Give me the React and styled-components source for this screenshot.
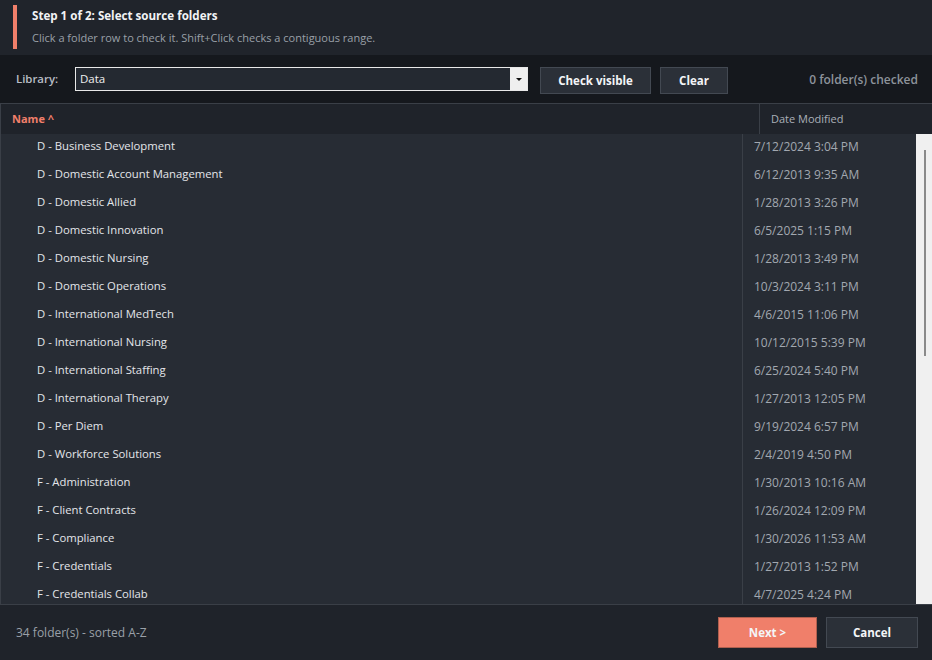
import React from "react";
import styled, { createGlobalStyle } from "styled-components";

const GlobalStyle = createGlobalStyle`
  html, body { margin: 0; padding: 0; background: #1f232a; }
  body { font-family: "Open Sans", "Noto Sans", sans-serif; }
  * { box-sizing: border-box; }
`;

const folders = [
  ["D - Business Development", "7/12/2024 3:04 PM"],
  ["D - Domestic Account Management", "6/12/2013 9:35 AM"],
  ["D - Domestic Allied", "1/28/2013 3:26 PM"],
  ["D - Domestic Innovation", "6/5/2025 1:15 PM"],
  ["D - Domestic Nursing", "1/28/2013 3:49 PM"],
  ["D - Domestic Operations", "10/3/2024 3:11 PM"],
  ["D - International MedTech", "4/6/2015 11:06 PM"],
  ["D - International Nursing", "10/12/2015 5:39 PM"],
  ["D - International Staffing", "6/25/2024 5:40 PM"],
  ["D - International Therapy", "1/27/2013 12:05 PM"],
  ["D - Per Diem", "9/19/2024 6:57 PM"],
  ["D - Workforce Solutions", "2/4/2019 4:50 PM"],
  ["F - Administration", "1/30/2013 10:16 AM"],
  ["F - Client Contracts", "1/26/2024 12:09 PM"],
  ["F - Compliance", "1/30/2026 11:53 AM"],
  ["F - Credentials", "1/27/2013 1:52 PM"],
  ["F - Credentials Collab", "4/7/2025 4:24 PM"],
];

const Page = styled.div`
  width: 932px;
  height: 660px;
  display: flex;
  flex-direction: column;
  background: #1f232a;
  color: #e4e6ea;
  font-size: 12px;
  overflow: hidden;
`;

const StepHeader = styled.div`
  height: 55px;
  padding: 5px 0 6px 13px;
  display: flex;
  background: #20242b;
`;

const StepMark = styled.div`
  width: 4px;
  background: #f07f6a;
`;

const StepText = styled.div`
  padding: 2px 0 0 15px;
  display: flex;
  flex-direction: column;
`;

const StepTitle = styled.div`
  font-weight: 700;
  font-size: 11.6px;
  color: #f2f3f5;
  line-height: 18px;
`;

const StepHint = styled.div`
  margin-top: 5px;
  font-size: 11px;
  color: #9aa0a8;
  line-height: 16px;
`;

const Toolbar = styled.div`
  height: 48px;
  display: flex;
  align-items: flex-start;
  padding: 12px 14px 0 16px;
  background: #15181d;
`;

const Label = styled.span`
  font-weight: 600;
  font-size: 11.4px;
  line-height: 24px;
  color: #b9bec6;
  width: 59px;
`;

const Select = styled.div`
  width: 453px;
  height: 24px;
  display: flex;
  border: 1px solid #e8e8e8;
  background: #242931;
`;

const SelectValue = styled.div`
  flex: 1;
  padding-left: 4px;
  line-height: 21px;
  font-size: 11.5px;
  color: #f0f0f0;
`;

const SelectArrow = styled.div`
  width: 17px;
  background: #efefef;
  display: flex;
  align-items: center;
  justify-content: center;
  &::after {
    content: "";
    border-left: 3px solid transparent;
    border-right: 3px solid transparent;
    border-top: 3px solid #111;
  }
`;

const Button = styled.button`
  height: ${(p) => p.$h || 27}px;
  width: ${(p) => p.$w}px;
  margin-left: ${(p) => p.$ml || 0}px;
  border: 1px solid ${(p) => (p.$primary ? "#b0604f" : "#434952")};
  background: ${(p) => (p.$primary ? "#f07f6a" : "#2b3038")};
  color: #f4f5f7;
  font-family: inherit;
  font-size: 11.5px;
  font-weight: 700;
  padding: 0;
`;

const Checked = styled.span`
  margin-left: auto;
  font-weight: 600;
  line-height: 25px;
  color: #8d939b;
`;

const Table = styled.div`
  flex: 1;
  display: flex;
  flex-direction: column;
  border-top: 1px solid #3a3f47;
  border-left: 1px solid #3a3f47;
  border-bottom: 1px solid #3a3f47;
  min-height: 0;
`;

const HeadRow = styled.div`
  height: 30px;
  display: flex;
  background: #1f232a;
`;

const HeadCell = styled.div`
  display: flex;
  align-items: center;
  padding: 0 0 2px ${(p) => p.$pl}px;
  width: ${(p) => (p.$w ? `${p.$w}px` : "auto")};
  flex: ${(p) => (p.$w ? "none" : 1)};
  border-left: ${(p) => (p.$divider ? "1px solid #3a3f47" : "none")};
  font-size: 11px;
  font-weight: ${(p) => (p.$active ? 700 : 400)};
  color: ${(p) => (p.$active ? "#f07f6a" : "#aab0b8")};
`;

const Body = styled.div`
  flex: 1;
  display: flex;
  min-height: 0;
`;

const Rows = styled.div`
  flex: 1;
  background: #272c34;
  overflow: hidden;
`;

const Row = styled.div`
  height: 28px;
  display: grid;
  grid-template-columns: 741px 1fr;
`;

const NameCell = styled.div`
  padding-left: 36px;
  line-height: 24px;
  font-size: 11.3px;
  color: #e4e6ea;
`;

const DateCell = styled.div`
  padding-left: 11px;
  line-height: 25px;
  color: #a2a8b0;
  border-left: 1px solid #3a3f47;
`;

const Scrollbar = styled.div`
  width: 16px;
  background: #f0f0f0;
  padding: 16px 0 0 8px;
`;

const Thumb = styled.div`
  width: 2px;
  height: 206px;
  background: #8a8a8a;
`;

const Footer = styled.div`
  height: 55px;
  display: flex;
  align-items: center;
  padding: 0 14px 0 16px;
  background: #1f232a;
`;

const Status = styled.span`
  color: #9aa0a8;
`;

export default function App() {
  return (
    <>
      <GlobalStyle />
      <Page>
        <StepHeader>
          <StepMark />
          <StepText>
            <StepTitle>Step 1 of 2: Select source folders</StepTitle>
            <StepHint>Click a folder row to check it. Shift+Click checks a contiguous range.</StepHint>
          </StepText>
        </StepHeader>
        <Toolbar>
          <Label>Library:</Label>
          <Select>
            <SelectValue>Data</SelectValue>
            <SelectArrow />
          </Select>
          <Button $w={111} $ml={12}>Check visible</Button>
          <Button $w={68} $ml={9}>Clear</Button>
          <Checked>0 folder(s) checked</Checked>
        </Toolbar>
        <Table>
          <HeadRow>
            <HeadCell $pl={11} $active>Name ^</HeadCell>
            <HeadCell $w={173} $pl={11} $divider>Date Modified</HeadCell>
          </HeadRow>
          <Body>
            <Rows>
              {folders.map(([name, date]) => (
                <Row key={name}>
                  <NameCell>{name}</NameCell>
                  <DateCell>{date}</DateCell>
                </Row>
              ))}
            </Rows>
            <Scrollbar>
              <Thumb />
            </Scrollbar>
          </Body>
        </Table>
        <Footer>
          <Status>34 folder(s) - sorted A-Z</Status>
          <Button $primary $w={99} $h={31} style={{ marginLeft: "auto" }}>Next &gt;</Button>
          <Button $w={92} $h={31} $ml={9}>Cancel</Button>
        </Footer>
      </Page>
    </>
  );
}
